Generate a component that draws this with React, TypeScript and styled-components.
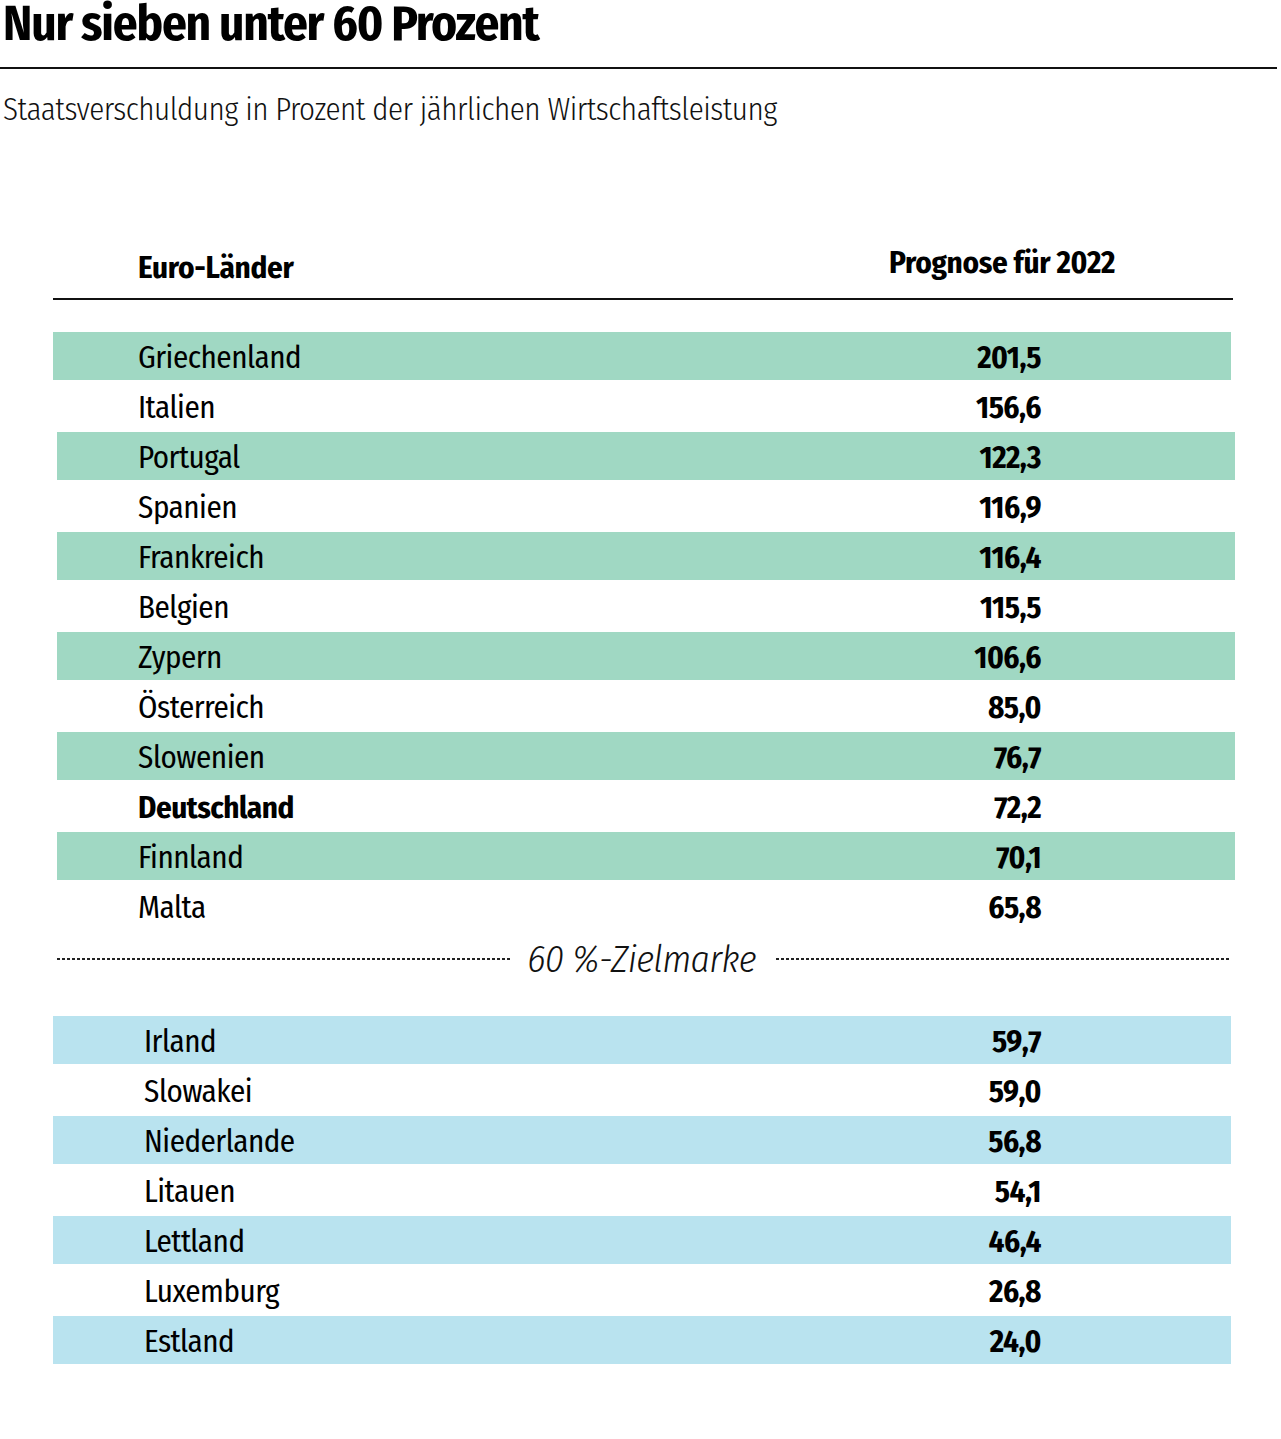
import React from "react";
import styled, { createGlobalStyle } from "styled-components";

const FONT = `"Fira Sans Condensed", "Roboto Condensed", "Liberation Sans", sans-serif`;

const Global = createGlobalStyle`
  html, body { margin: 0; padding: 0; background: #ffffff; }
  body { font-family: ${FONT}; color: #000; }
`;

const Page = styled.div`
  width: 1281px;
  box-sizing: border-box;
  padding-bottom: 70px;
`;

const Title = styled.h1`
  margin: 0;
  padding-left: 3px;
  font-size: 49px;
  line-height: 47px;
  font-weight: 700;
  letter-spacing: -1.2px;
  white-space: nowrap;
`;

const Rule = styled.div`
  width: 1277px;
  height: 2px;
  background: #111;
  margin-top: 20px;
`;

const Subtitle = styled.p`
  margin: 21px 0 0;
  padding-left: 3px;
  font-size: 31px;
  line-height: 40px;
  font-weight: 300;
  letter-spacing: -0.5px;
  color: #111;
`;

const Table = styled.div`
  margin-left: 53px;
  width: 1180px;
`;

const Header = styled.div`
  margin-top: 117px;
  display: grid;
  grid-template-columns: 1fr auto;
  align-items: end;
  padding: 0 118px 14px 85px;
  border-bottom: 2px solid #111;
`;

const HeadCell = styled.div<{ $lift?: number }>`
  font-size: 31px;
  line-height: 32px;
  font-weight: 700;
  letter-spacing: -0.3px;
  margin-bottom: ${(p) => p.$lift ?? 0}px;
`;

const Body = styled.div`
  margin-top: 32px;
`;

const Row = styled.div<{ $bg?: string; $shift?: number; $indent: number }>`
  display: grid;
  grid-template-columns: 1fr auto;
  height: 48px;
  margin: 0 ${(p) => 2 - (p.$shift ?? 0)}px 2px ${(p) => p.$shift ?? 0}px;
  box-sizing: border-box;
  padding: 4px ${(p) => 190 + (p.$shift ?? 0)}px 0
    ${(p) => p.$indent - (p.$shift ?? 0)}px;
  background: ${(p) => p.$bg ?? "transparent"};
  font-size: 31px;
  line-height: 44px;
  letter-spacing: -0.5px;
`;

const Name = styled.span<{ $bold?: boolean }>`
  font-weight: ${(p) => (p.$bold ? 700 : 400)};
`;

const Value = styled.span`
  font-weight: 700;
  text-align: right;
`;

const Target = styled.div`
  height: 84px;
  box-sizing: border-box;
  padding-bottom: 30px;
  display: flex;
  align-items: center;
  margin-left: 4px;
  width: 1173px;
`;

const Dots = styled.div`
  flex: 1;
  height: 1.5px;
  background: repeating-linear-gradient(
    to right,
    #222 0 3px,
    transparent 3px 5px
  );
`;

const TargetLabel = styled.span`
  font-size: 38px;
  line-height: 44px;
  font-style: italic;
  font-weight: 300;
  letter-spacing: -0.7px;
  color: #111;
  margin: 0 20px 0 16px;
`;

const GREEN = "#a0d8c3";
const BLUE = "#b9e3ef";

const above: [string, string][] = [
  ["Griechenland", "201,5"],
  ["Italien", "156,6"],
  ["Portugal", "122,3"],
  ["Spanien", "116,9"],
  ["Frankreich", "116,4"],
  ["Belgien", "115,5"],
  ["Zypern", "106,6"],
  ["Österreich", "85,0"],
  ["Slowenien", "76,7"],
  ["Deutschland", "72,2"],
  ["Finnland", "70,1"],
  ["Malta", "65,8"],
];

const below: [string, string][] = [
  ["Irland", "59,7"],
  ["Slowakei", "59,0"],
  ["Niederlande", "56,8"],
  ["Litauen", "54,1"],
  ["Lettland", "46,4"],
  ["Luxemburg", "26,8"],
  ["Estland", "24,0"],
];

export default function App() {
  return (
    <Page>
      <Global />
      <Title>Nur sieben unter 60 Prozent</Title>
      <Rule />
      <Subtitle>
        Staatsverschuldung in Prozent der jährlichen Wirtschaftsleistung
      </Subtitle>
      <Table>
        <Header>
          <HeadCell>Euro-Länder</HeadCell>
          <HeadCell $lift={5}>Prognose für 2022</HeadCell>
        </Header>
        <Body>
          {above.map(([n, v], i) => (
            <Row
              key={n}
              $indent={85}
              $bg={i % 2 === 0 ? GREEN : undefined}
              $shift={i % 2 === 0 && i > 0 ? 4 : 0}
            >
              <Name $bold={n === "Deutschland"}>{n}</Name>
              <Value>{v}</Value>
            </Row>
          ))}
          <Target>
            <Dots />
            <TargetLabel>60 %-Zielmarke</TargetLabel>
            <Dots />
          </Target>
          {below.map(([n, v], i) => (
            <Row key={n} $indent={91} $bg={i % 2 === 0 ? BLUE : undefined}>
              <Name>{n}</Name>
              <Value>{v}</Value>
            </Row>
          ))}
        </Body>
      </Table>
    </Page>
  );
}
